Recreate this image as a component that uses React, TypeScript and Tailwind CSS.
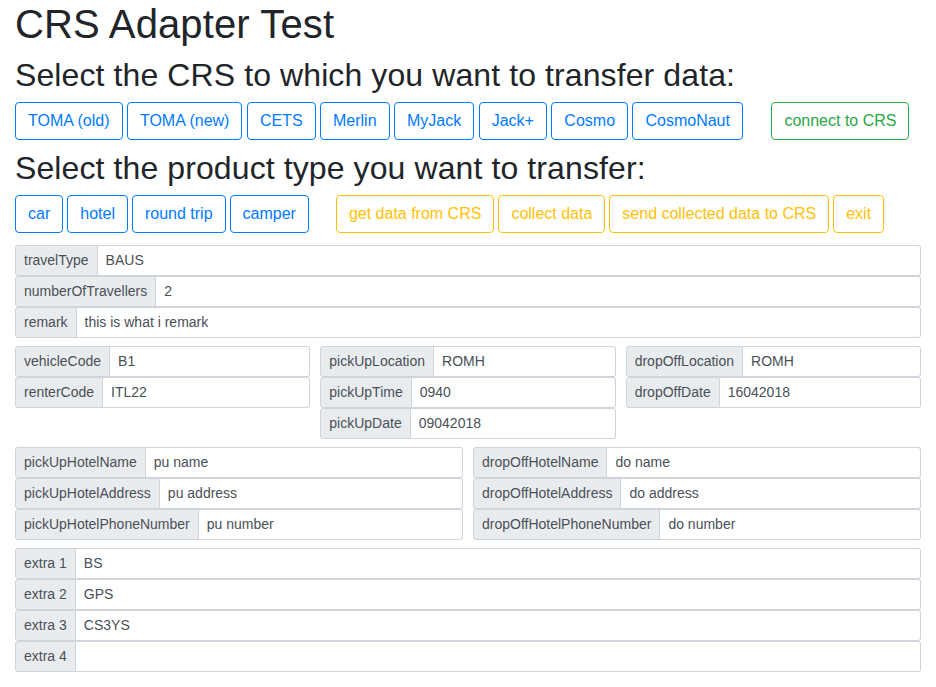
import React from "react";

const btnBase =
  "h-[38px] px-3 border rounded-[4px] text-[16px] leading-[24px] bg-white whitespace-nowrap";
const blue = btnBase + " border-[#007bff] text-[#007bff]";
const yellow = btnBase + " border-[#ffc107] text-[#ffc107]";
const green = btnBase + " border-[#28a745] text-[#28a745]";

function Field({ label, value }: { label: string; value: string }) {
  return (
    <div className="flex h-[31px] w-full text-[14px] leading-[21px] text-[#495057]">
      <div className="flex items-center px-2 bg-[#e9ecef] border border-[#ced4da] rounded-l-[3px] whitespace-nowrap">
        {label}
      </div>
      <div className="flex items-center flex-1 px-2 bg-white border border-l-0 border-[#ced4da] rounded-r-[3px] whitespace-nowrap overflow-hidden">
        {value}
      </div>
    </div>
  );
}

export default function App() {
  return (
    <div
      className="px-[15px] bg-white text-[#212529] min-h-[687px]"
      style={{ fontFamily: '"Liberation Sans", Arial, sans-serif' }}
    >
      <h1 className="text-[40px] leading-[48px] mb-2 font-normal tracking-[0.12px]">CRS Adapter Test</h1>
      <h2 className="text-[32px] leading-[38px] mb-2 font-normal tracking-[0.1px]">
        Select the CRS to which you want to transfer data:
      </h2>
      <div className="flex gap-[4.45px]">
        <button className={blue}>TOMA (old)</button>
        <button className={blue}>TOMA (new)</button>
        <button className={blue}>CETS</button>
        <button className={blue}>Merlin</button>
        <button className={blue}>MyJack</button>
        <button className={blue}>Jack+</button>
        <button className={blue}>Cosmo</button>
        <button className={blue}>CosmoNaut</button>
        <button className={green + " ml-[24px]"}>connect to CRS</button>
      </div>
      <h2 className="text-[32px] leading-[38px] mt-[9px] mb-2 font-normal tracking-[0.1px]">
        Select the product type you want to transfer:
      </h2>
      <div className="flex gap-1">
        <button className={blue}>car</button>
        <button className={blue}>hotel</button>
        <button className={blue}>round trip</button>
        <button className={blue}>camper</button>
        <button className={yellow + " ml-[23px]"}>get data from CRS</button>
        <button className={yellow}>collect data</button>
        <button className={yellow}>send collected data to CRS</button>
        <button className={yellow}>exit</button>
      </div>

      <div className="mt-3 flex flex-col">
        <Field label="travelType" value="BAUS" />
        <Field label="numberOfTravellers" value="2" />
        <Field label="remark" value="this is what i remark" />
      </div>

      <div className="mt-2 grid grid-cols-3 gap-x-[10px] items-start">
        <div className="flex flex-col">
          <Field label="vehicleCode" value="B1" />
          <Field label="renterCode" value="ITL22" />
        </div>
        <div className="flex flex-col">
          <Field label="pickUpLocation" value="ROMH" />
          <Field label="pickUpTime" value="0940" />
          <Field label="pickUpDate" value="09042018" />
        </div>
        <div className="flex flex-col">
          <Field label="dropOffLocation" value="ROMH" />
          <Field label="dropOffDate" value="16042018" />
        </div>
      </div>

      <div className="mt-2 grid grid-cols-2 gap-x-[10px] items-start">
        <div className="flex flex-col">
          <Field label="pickUpHotelName" value="pu name" />
          <Field label="pickUpHotelAddress" value="pu address" />
          <Field label="pickUpHotelPhoneNumber" value="pu number" />
        </div>
        <div className="flex flex-col">
          <Field label="dropOffHotelName" value="do name" />
          <Field label="dropOffHotelAddress" value="do address" />
          <Field label="dropOffHotelPhoneNumber" value="do number" />
        </div>
      </div>

      <div className="mt-2 flex flex-col">
        <Field label="extra 1" value="BS" />
        <Field label="extra 2" value="GPS" />
        <Field label="extra 3" value="CS3YS" />
        <Field label="extra 4" value="" />
      </div>
    </div>
  );
}
